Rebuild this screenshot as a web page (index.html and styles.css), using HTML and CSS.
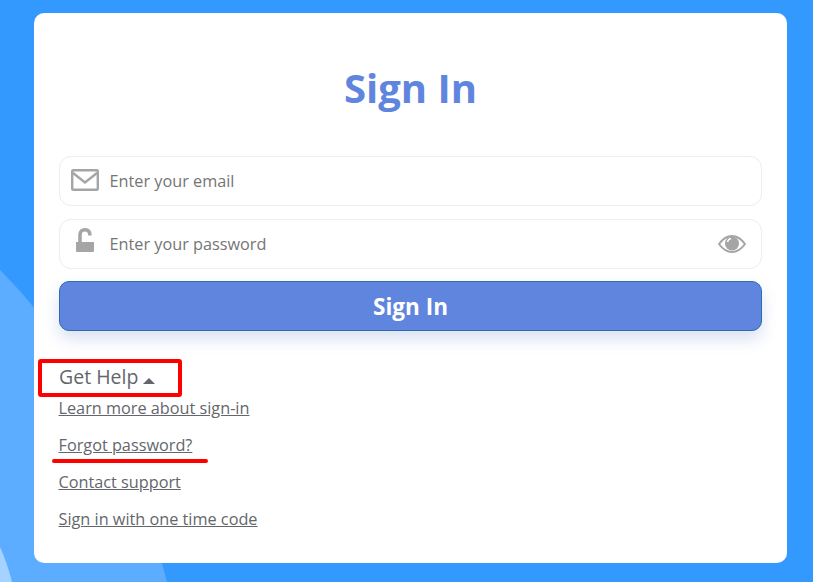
FILE: index.html
```html
<!DOCTYPE html>
<html lang="en">
<head>
<meta charset="utf-8">
<title>Sign In</title>
<link rel="stylesheet" href="styles.css">
</head>
<body>
<svg class="backdrop" width="813" height="582" viewBox="0 0 813 582" aria-hidden="true">
  <path class="blob-mid" d="M0 270C30 300 100 380 135 480C150 520 160 555 167 582H0Z"/>
  <path class="blob-light" d="M0 547C5 558 9 570 12 582H0Z"/>
</svg>
<main class="card">
  <h1 class="title">Sign In</h1>
  <form class="form">
    <label class="field">
      <svg class="icon-mail" width="28" height="22" viewBox="0 0 28 22" aria-hidden="true">
        <rect x="1.200" y="1.200" width="25.600" height="19.600" rx="1" fill="none" stroke="#a5a5a5" stroke-width="2.400"/>
        <path d="M2 4L14 13.500L26 4" fill="none" stroke="#a5a5a5" stroke-width="2.400"/>
      </svg>
      <input class="input" type="text" placeholder="Enter your email">
    </label>
    <label class="field">
      <svg class="icon-lock" width="20" height="25" viewBox="0 0 20 25" aria-hidden="true">
        <path d="M1 14H19V23A1 1 0 0 1 18 24H2A1 1 0 0 1 1 23Z" fill="#a5a5a5"/>
        <path d="M5 14V7C5 3.500 7 1.800 10 1.800C13 1.800 15 3.500 15 7.500" fill="none" stroke="#a5a5a5" stroke-width="3.600"/>
      </svg>
      <input class="input" type="text" placeholder="Enter your password">
      <svg class="icon-eye" width="28" height="18" viewBox="0 0 28 18" aria-hidden="true">
        <path d="M1 9C5 3.500 9 1 14 1C19 1 23 3.500 27 9C23 14.500 19 17 14 17C9 17 5 14.500 1 9Z" fill="none" stroke="#a5a5a5" stroke-width="2"/>
        <circle cx="14" cy="8.500" r="7" fill="#a5a5a5"/>
        <path d="M9.500 7C10 5 11.500 3.800 13 3.500" fill="none" stroke="#fff" stroke-width="1.400"/>
      </svg>
    </label>
    <button class="submit" type="button">Sign In</button>
  </form>
  <section class="help">
    <div class="help-toggle">Get Help <span class="caret"></span></div>
    <ul class="help-links">
      <li><a href="#">Learn more about sign-in</a></li>
      <li><a href="#">Forgot password?</a></li>
      <li><a href="#">Contact support</a></li>
      <li><a href="#">Sign in with one time code</a></li>
    </ul>
  </section>
  <div class="mark-box"></div>
  <div class="mark-line"></div>
</main>
</body>
</html>
```
FILE: styles.css
```css
* { box-sizing: border-box; }
html, body { margin: 0; height: 100%; }
body {
  position: relative;
  width: 813px;
  height: 582px;
  overflow: hidden;
  background: #3399ff;
  font-family: "Open Sans", sans-serif;
  padding: 13px 26px 19px 34px;
}
.backdrop { position: absolute; left: 0; top: 0; }
.blob-mid { fill: #5cadff; }
.blob-light { fill: #a6d2ff; }
.card {
  position: relative;
  height: 550px;
  background: #fff;
  border-radius: 10px;
  padding: 47px 25px 0;
}
.title {
  margin: 0;
  height: 55px;
  text-align: center;
  font-size: 40px;
  line-height: 55px;
  font-weight: 700;
  color: #6085de;
}
.form {
  display: flex;
  flex-direction: column;
  gap: 13px;
  margin-top: 41px;
}
.field {
  display: flex;
  align-items: center;
  height: 50px;
  border: 1px solid #e5eff5;
  border-radius: 12px;
  background: #fff;
  position: relative;
}
.icon-mail { position: absolute; left: 11px; top: 12px; }
.icon-lock { position: absolute; left: 15px; top: 8px; }
.icon-eye { margin-right: 15px; flex: none; }
.input {
  flex: 1;
  min-width: 0;
  height: 100%;
  border: 0;
  outline: 0;
  background: transparent;
  padding: 0 0 0 49.500px;
  font: 16.250px "Open Sans", sans-serif;
  color: #6f6f6f;
}
.input::placeholder { color: #757575; opacity: 1; }
.submit {
  height: 50px;
  margin-top: -1px;
  padding: 0;
  border: 1px solid #2f6cab;
  border-radius: 10px;
  background: #6085de;
  color: #fff;
  font: 700 22.500px "Open Sans", sans-serif;
  box-shadow: 0 8px 16px rgba(70, 100, 190, .2);
}
.help { margin-top: 32px; }
.help-toggle {
  font-size: 19.500px;
  line-height: 27px;
  color: #63676c;
}
.caret {
  display: inline-block;
  width: 0;
  height: 0;
  margin-left: 0;
  vertical-align: 0;
  border-left: 6px solid transparent;
  border-right: 6px solid transparent;
  border-bottom: 6px solid #63676c;
}
.help-links {
  list-style: none;
  margin: 7px 0 0;
  padding: 0;
  display: flex;
  flex-direction: column;
  gap: 15px;
}
.help-links li { line-height: 22px; font-size: 16.250px; }
.help-links a { margin-left: -0.500px; color: #63676c; text-decoration: underline; }
.mark-box {
  position: absolute;
  left: 4px;
  top: 346px;
  width: 144px;
  height: 38px;
  border: 4px solid #f00;
  border-radius: 3px;
}
.mark-line {
  position: absolute;
  left: 18px;
  top: 446px;
  width: 156px;
  height: 4px;
  border-radius: 2px;
  background: #f00;
}
```
